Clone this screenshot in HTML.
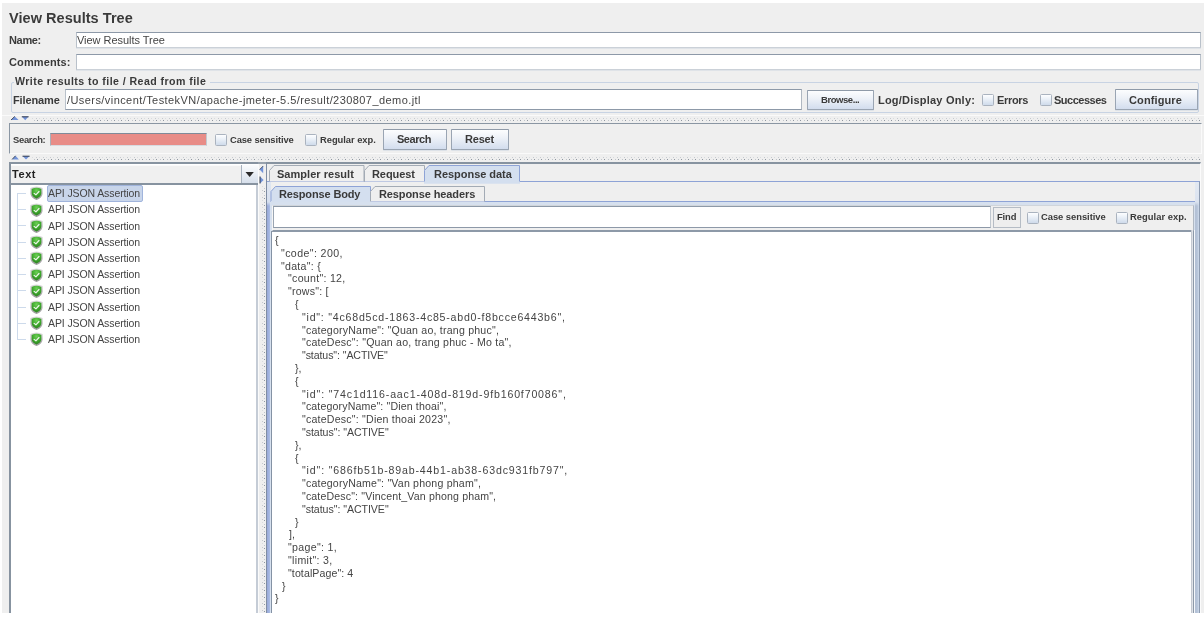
<!DOCTYPE html>
<html><head><meta charset="utf-8"><style>
html,body{margin:0;padding:0;background:#fff;width:1204px;height:618px;overflow:hidden;position:relative;font-family:"Liberation Sans",sans-serif;}
div{box-sizing:border-box;}
.a{position:absolute;}
.t{position:absolute;white-space:pre;will-change:transform;}
.page{position:absolute;left:2px;top:3px;width:1202px;height:610px;background:#efefef;}
.fld{position:absolute;background:#fff;border-top:1px solid #8d99a8;border-left:1px solid #b9c1ca;border-right:1px solid #b9c1ca;border-bottom:1px solid #cbd1d8;box-shadow:0 1px 0 #dfe3e8;}
.btn{position:absolute;border:1px solid #9aa5b3;border-top-color:#8f9aa8;border-radius:1px;background:linear-gradient(#fcfdfe,#eef2f8 40%,#d2ddee);box-shadow:0 1px 0 #dde2e8;}
.cb{position:absolute;width:12px;height:11.8px;border:1px solid #aab3bf;border-radius:1.5px;background:linear-gradient(#fdfeff,#e9eff7 45%,#cfdbeb);}
.split{position:absolute;background-image:radial-gradient(circle at 1px 1px,#b8bcc2 0.7px,transparent 0.9px);background-size:3.5px 2px;}

</style></head><body>
<div class="page"></div>
<!-- name / comments -->
<div class="fld" style="left:76px;top:32px;width:1125px;height:16px;"></div>
<div class="fld" style="left:76px;top:54px;width:1125px;height:16px;"></div>
<!-- group box -->
<div class="a" style="left:11px;top:82px;width:1188px;height:31px;border:1px solid #c8d3e3;border-radius:2px;"></div>
<div class="a" style="left:14px;top:76px;width:196px;height:10px;background:#efefef;"></div>
<div class="fld" style="left:65px;top:89px;width:737px;height:21px;border-bottom-color:#8d99a8;border-right-color:#b0b8c2;box-shadow:none;"></div>
<div class="btn" style="left:807px;top:90px;width:67px;height:20px;"></div>
<div class="cb" style="left:982px;top:94px;"></div>
<div class="cb" style="left:1040px;top:94px;"></div>
<div class="btn" style="left:1115px;top:89px;width:83px;height:21px;"></div>
<!-- splitter 1 -->
<svg class="a" style="left:0;top:0" width="1204" height="618">
<defs>
<pattern id="dh" x="0" y="0" width="7" height="4" patternUnits="userSpaceOnUse"><rect x="1" y="0" width="1" height="1" fill="#c6cacf"/><rect x="4" y="0" width="1" height="1" fill="#d9dcdf"/><rect x="2" y="2" width="1" height="1" fill="#8e96a0"/><rect x="6" y="2" width="1" height="1" fill="#c0c5cb"/></pattern>
<pattern id="dv" x="0" y="0" width="4" height="7" patternUnits="userSpaceOnUse"><rect x="0" y="1" width="1" height="1" fill="#c6cacf"/><rect x="0" y="4" width="1" height="1" fill="#d9dcdf"/><rect x="2" y="2" width="1" height="1" fill="#8e96a0"/><rect x="2" y="6" width="1" height="1" fill="#c0c5cb"/></pattern>
</defs>
<rect x="31" y="0" width="1170" height="3" fill="url(#dh)" transform="translate(0,118)"/>
<rect x="31" y="0" width="1170" height="3" fill="url(#dh)" transform="translate(0,157)"/>
<rect x="0" y="186" width="3" height="427" fill="url(#dv)" transform="translate(262,0)"/>
</svg>

<div class="a" style="left:2px;top:115px;width:1202px;height:1px;background:#fafafa;"></div>
<svg class="a" style="left:0;top:0" width="40" height="170">
<path d="M11,120 L14.8,116.4 L18.6,120 Z" fill="#7192d8"/><path d="M11,120 L14.8,116.4" stroke="#3b4250" stroke-width="0.9"/>
<path d="M21.8,116.6 L28.6,116.6 L25.2,120.2 Z" fill="#7192d8"/><path d="M21.8,116.8 L28.6,116.8" stroke="#3b4250" stroke-width="1"/>
<path d="M12.1,159.4 L15.5,155.8 L18.9,159.4 Z" fill="#7192d8"/><path d="M12.1,159.4 L15.5,155.8" stroke="#3b4250" stroke-width="0.9"/>
<path d="M22.5,156 L29.6,156 L26,159.6 Z" fill="#7192d8"/><path d="M22.5,156.2 L29.6,156.2" stroke="#3b4250" stroke-width="1"/>
</svg>
<!-- search panel -->
<div class="a" style="left:9px;top:123px;width:1193px;height:31px;border-top:1.5px solid #8a96a3;border-left:1px solid #8a96a3;border-right:1px solid #fafafa;border-bottom:1px solid #fafafa;"></div>
<div class="a" style="left:50px;top:133px;width:157px;height:13px;background:#e88c87;border-top:1px solid #7f8a98;border-left:1px solid #a9b0b9;border-right:1px solid #c3c9d0;border-bottom:1px solid #d7dbe0;"></div>
<div class="cb" style="left:215px;top:134px;"></div>
<div class="cb" style="left:305px;top:134px;"></div>
<div class="btn" style="left:383px;top:129px;width:64px;height:21px;"></div>
<div class="btn" style="left:451px;top:129px;width:58px;height:21px;"></div>
<!-- splitter 2 -->
<!-- tree panel -->
<div class="a" style="left:9px;top:162px;width:249px;height:451px;border-top:2.5px solid #8793a0;border-left:2px solid #8793a0;background:#fff;"></div>
<div class="a" style="left:11px;top:164.5px;width:246.5px;height:20px;background:#f0f0f0;border-top:1px solid #fafafa;border-bottom:2px solid #8793a0;"></div>
<div class="a" style="left:241px;top:164.5px;width:16.5px;height:18px;background:linear-gradient(#fbfcfd,#d6dfeb);border-left:1px solid #a8b2be;"></div>
<svg class="a" style="left:0;top:0" width="260" height="180"><path d="M245.5,172 L253.8,172 L249.65,177 Z" fill="#2a2a2a"/></svg>
<div class="a" style="left:256px;top:184.5px;width:1.8px;height:428.5px;background:#c5ccd6;"></div><div class="a" style="left:258px;top:163.5px;width:1px;height:449.5px;background:#fbfbfb;"></div>
<!-- vertical splitter -->
<div class="a" style="left:258px;top:162px;width:8px;height:1.5px;background:#98a2ad;"></div><svg class="a" style="left:0;top:0" width="280" height="200"><path d="M263.2,166 L263.2,173.2 L259.6,169.6 Z" fill="#7192d8"/><path d="M263.2,166 L259.6,169.6" stroke="#3b4250" stroke-width="0.8"/><path d="M260,176.5 L260,183.5 L263.6,180 Z" fill="#7192d8"/><path d="M260,176.5 L260,183.5" stroke="#3b4250" stroke-width="1"/></svg>
<!-- right panel -->
<div class="a" style="left:266px;top:162px;width:935px;height:451px;border-top:2px solid #8793a0;border-left:1px solid #7f8da3;border-right:1px solid #fbfbfb;background:#efefef;"></div>
<!-- outer tab content -->
<div class="a" style="left:267px;top:181px;width:933px;height:432px;border-top:1px solid #8ea3d6;border-right:1px solid #8d9bb0;background:#efefef;"></div>
<div class="a" style="left:267px;top:182px;width:3.5px;height:431px;background:linear-gradient(#dfe6f1,#d6dfee 20px,rgba(0,0,0,0) 24px),linear-gradient(90deg,#97a7d7,#a4b6e0 50%,#b0c4e8);"></div>
<div class="a" style="left:1195px;top:182px;width:4px;height:431px;background:linear-gradient(#e3e9f2,#dbe3f0 20px,rgba(0,0,0,0) 24px),linear-gradient(90deg,#b3c0d4,#b5c3d8 55%,#d0dcec);"></div>
<!-- outer tabs -->
<svg class="a" style="left:268px;top:165px" width="253" height="20" viewBox="0 0 253 20">
<path d="M1.5,16.5 L1.5,5.5 L6,0.5 L96,0.5 L96,16.5" fill="#efefef" stroke="#a3abb5" stroke-width="1"/>
<path d="M96.5,16.5 L96.5,5.5 L101,0.5 L156.5,0.5 L156.5,16.5" fill="#efefef" stroke="#a3abb5" stroke-width="1"/>
<path d="M156,18.8 L156,5.5 L161,0 L252,0 L252,18.8 Z" fill="#d4dfef"/><path d="M156.5,16.5 L156.5,5.5 L161,0.5 L251.5,0.5 L251.5,16.5" fill="none" stroke="#8ea3d6" stroke-width="1"/>
</svg>
<!-- inner tab content -->
<div class="a" style="left:270px;top:201px;width:925px;height:412px;border-top:1px solid #8ea3d6;background:#d6e0ee;"></div>
<svg class="a" style="left:270px;top:186px" width="216" height="16" viewBox="0 0 216 16">
<path d="M0.5,16 L0.5,5.5 L5.5,0 L101,0 L101,16 Z" fill="#d4dfef"/><path d="M1,15 L1,5.5 L5.5,0.5 L100.5,0.5 L100.5,15" fill="none" stroke="#8ea3d6" stroke-width="1"/>
<path d="M100.5,15.5 L100.5,5.5 L105,0.5 L214.5,0.5 L214.5,15.5" fill="#efefef" stroke="#a3abb5" stroke-width="1"/>
</svg>
<!-- find panel -->
<div class="a" style="left:271.5px;top:205px;width:922.5px;height:26px;background:#efefef;border-top:1px solid #d0d5db;border-left:1px solid #f6f6f6;border-right:1px solid #b0b8c2;border-bottom:1px solid #8d99a8;"></div>
<div class="a" style="left:273px;top:206px;width:718px;height:21.5px;background:#fff;border-top:1.5px solid #8d99a8;border-left:1px solid #9aa5b2;border-right:1px solid #c0c7cf;border-bottom:1px solid #8d99a8;"></div>
<div class="a" style="left:992.5px;top:206.5px;width:28.5px;height:21px;border:1px solid #b5bcc5;background:#eeeeee;"></div>
<div class="cb" style="left:1027px;top:212px;"></div>
<div class="cb" style="left:1116px;top:212px;"></div>
<!-- text area -->
<div class="a" style="left:270.5px;top:230.5px;width:923.5px;height:382.5px;border-top:0.5px solid #8d99a8;background:#fff;border-left:1.5px solid #8492a4;border-right:1px solid #8d99a8;"></div><div class="a" style="left:1191px;top:230px;width:1px;height:383px;background:#c5cad2;"></div><div class="a" style="left:1192px;top:230px;width:1px;height:383px;background:#e0e3e8;"></div><div class="a" style="left:1194px;top:230px;width:1px;height:383px;background:#f5f8fc;"></div>
<!-- tree items -->
<div class="a" style="left:47.3px;top:185.2px;width:95.3px;height:16.4px;background:#c8d5ea;border:1px solid #a0b4dc;border-radius:2px;"></div>
<div class="a" style="left:17px;top:193px;width:1px;height:147px;background:#cddaeb;"></div>
<svg width="0" height="0" style="position:absolute"><defs><linearGradient id="sg" x1="0" y1="0" x2="0" y2="1"><stop offset="0" stop-color="#dcdcdc"/><stop offset="0.5" stop-color="#b4b4b4"/><stop offset="1" stop-color="#9a9a9a"/></linearGradient><radialGradient id="gg" cx="0.5" cy="0.25" r="0.8"><stop offset="0" stop-color="#6ccf55"/><stop offset="0.55" stop-color="#3da62c"/><stop offset="1" stop-color="#2a7f1f"/></radialGradient><symbol id="shield" viewBox="0 0 13 14"><path d="M0.4,2 Q6.5,-1.2 12.6,2 L12.6,7 C12.6,10.6 9.6,12.9 6.5,13.9 C3.4,12.9 0.4,10.6 0.4,7 Z" fill="url(#sg)"/><path d="M1.7,3.1 Q6.5,0.4 11.3,3.1 L11.3,7 C11.3,9.8 9,11.6 6.5,12.4 C4,11.6 1.7,9.8 1.7,7 Z" fill="url(#gg)"/><path d="M4.1,7.4 L5.9,8.8 L9,5.5" fill="none" stroke="#eef8ea" stroke-width="1.2" stroke-linecap="round" stroke-linejoin="round"/></symbol></defs></svg>
<div class="a" style="left:18px;top:193.00px;width:8px;height:1px;background:#cddaeb;"></div>
<svg class="a" style="left:30px;top:186.40px" width="13" height="14"><use href="#shield"/></svg>
<div class="a" style="left:18px;top:209.22px;width:8px;height:1px;background:#cddaeb;"></div>
<svg class="a" style="left:30px;top:202.62px" width="13" height="14"><use href="#shield"/></svg>
<div class="a" style="left:18px;top:225.44px;width:8px;height:1px;background:#cddaeb;"></div>
<svg class="a" style="left:30px;top:218.84px" width="13" height="14"><use href="#shield"/></svg>
<div class="a" style="left:18px;top:241.66px;width:8px;height:1px;background:#cddaeb;"></div>
<svg class="a" style="left:30px;top:235.06px" width="13" height="14"><use href="#shield"/></svg>
<div class="a" style="left:18px;top:257.88px;width:8px;height:1px;background:#cddaeb;"></div>
<svg class="a" style="left:30px;top:251.28px" width="13" height="14"><use href="#shield"/></svg>
<div class="a" style="left:18px;top:274.10px;width:8px;height:1px;background:#cddaeb;"></div>
<svg class="a" style="left:30px;top:267.50px" width="13" height="14"><use href="#shield"/></svg>
<div class="a" style="left:18px;top:290.32px;width:8px;height:1px;background:#cddaeb;"></div>
<svg class="a" style="left:30px;top:283.72px" width="13" height="14"><use href="#shield"/></svg>
<div class="a" style="left:18px;top:306.54px;width:8px;height:1px;background:#cddaeb;"></div>
<svg class="a" style="left:30px;top:299.94px" width="13" height="14"><use href="#shield"/></svg>
<div class="a" style="left:18px;top:322.76px;width:8px;height:1px;background:#cddaeb;"></div>
<svg class="a" style="left:30px;top:316.16px" width="13" height="14"><use href="#shield"/></svg>
<div class="a" style="left:18px;top:338.98px;width:8px;height:1px;background:#cddaeb;"></div>
<svg class="a" style="left:30px;top:332.38px" width="13" height="14"><use href="#shield"/></svg>

<div class="t" style="left:8.83px;top:9.88px;font-size:14.5px;line-height:16.20px;font-weight:bold;color:#3a3a3a;letter-spacing:0.045px;">View Results Tree</div>
<div class="t" style="left:9.04px;top:34.25px;font-size:11px;line-height:12.29px;font-weight:bold;color:#3a3a3a;letter-spacing:-0.336px;">Name:</div>
<div class="t" style="left:76.94px;top:34.05px;font-size:11px;line-height:12.29px;color:#444444;letter-spacing:-0.036px;">View Results Tree</div>
<div class="t" style="left:8.54px;top:56.14px;font-size:11px;line-height:12.29px;font-weight:bold;color:#3a3a3a;letter-spacing:0.121px;">Comments:</div>
<div class="t" style="left:15.36px;top:75.61px;font-size:10.6px;line-height:11.84px;font-weight:bold;color:#3a3a3a;letter-spacing:0.438px;">Write results to file / Read from file</div>
<div class="t" style="left:12.84px;top:93.95px;font-size:11px;line-height:12.29px;font-weight:bold;color:#3a3a3a;letter-spacing:-0.115px;">Filename</div>
<div class="t" style="left:67.14px;top:94.05px;font-size:11px;line-height:12.29px;color:#444444;letter-spacing:0.428px;">/Users/vincent/TestekVN/apache-jmeter-5.5/result/230807_demo.jtl</div>
<div class="t" style="left:820.83px;top:94.70px;font-size:9.5px;line-height:10.61px;font-weight:bold;color:#3a3a3a;letter-spacing:-0.436px;">Browse...</div>
<div class="t" style="left:877.74px;top:94.14px;font-size:11px;line-height:12.29px;font-weight:bold;color:#3a3a3a;letter-spacing:0.210px;">Log/Display Only:</div>
<div class="t" style="left:996.74px;top:94.05px;font-size:11px;line-height:12.29px;font-weight:bold;color:#3a3a3a;letter-spacing:-0.330px;">Errors</div>
<div class="t" style="left:1053.84px;top:94.05px;font-size:11px;line-height:12.29px;font-weight:bold;color:#3a3a3a;letter-spacing:-0.501px;">Successes</div>
<div class="t" style="left:1129.34px;top:94.05px;font-size:11px;line-height:12.29px;font-weight:bold;color:#3a3a3a;letter-spacing:0.116px;">Configure</div>
<div class="t" style="left:13.44px;top:134.59px;font-size:9.4px;line-height:10.50px;font-weight:bold;color:#3a3a3a;letter-spacing:-0.276px;">Search:</div>
<div class="t" style="left:229.94px;top:134.59px;font-size:9.4px;line-height:10.50px;font-weight:bold;color:#3a3a3a;letter-spacing:-0.108px;">Case sensitive</div>
<div class="t" style="left:319.94px;top:134.59px;font-size:9.4px;line-height:10.50px;font-weight:bold;color:#3a3a3a;letter-spacing:-0.048px;">Regular exp.</div>
<div class="t" style="left:397.34px;top:133.44px;font-size:11px;line-height:12.29px;font-weight:bold;color:#3a3a3a;letter-spacing:-0.465px;">Search</div>
<div class="t" style="left:465.04px;top:133.44px;font-size:11px;line-height:12.29px;font-weight:bold;color:#3a3a3a;letter-spacing:-0.197px;">Reset</div>
<div class="t" style="left:12.44px;top:167.74px;font-size:11px;line-height:12.29px;font-weight:bold;color:#222222;letter-spacing:0.556px;">Text</div>
<div class="t" style="left:47.97px;top:188.10px;font-size:10.5px;line-height:11.73px;color:#444444;letter-spacing:-0.107px;">API JSON Assertion</div>
<div class="t" style="left:47.97px;top:204.32px;font-size:10.5px;line-height:11.73px;color:#444444;letter-spacing:-0.107px;">API JSON Assertion</div>
<div class="t" style="left:47.97px;top:220.54px;font-size:10.5px;line-height:11.73px;color:#444444;letter-spacing:-0.107px;">API JSON Assertion</div>
<div class="t" style="left:47.97px;top:236.76px;font-size:10.5px;line-height:11.73px;color:#444444;letter-spacing:-0.107px;">API JSON Assertion</div>
<div class="t" style="left:47.97px;top:252.98px;font-size:10.5px;line-height:11.73px;color:#444444;letter-spacing:-0.107px;">API JSON Assertion</div>
<div class="t" style="left:47.97px;top:269.20px;font-size:10.5px;line-height:11.73px;color:#444444;letter-spacing:-0.107px;">API JSON Assertion</div>
<div class="t" style="left:47.97px;top:285.42px;font-size:10.5px;line-height:11.73px;color:#444444;letter-spacing:-0.107px;">API JSON Assertion</div>
<div class="t" style="left:47.97px;top:301.64px;font-size:10.5px;line-height:11.73px;color:#444444;letter-spacing:-0.107px;">API JSON Assertion</div>
<div class="t" style="left:47.97px;top:317.86px;font-size:10.5px;line-height:11.73px;color:#444444;letter-spacing:-0.107px;">API JSON Assertion</div>
<div class="t" style="left:47.97px;top:334.08px;font-size:10.5px;line-height:11.73px;color:#444444;letter-spacing:-0.107px;">API JSON Assertion</div>
<div class="t" style="left:276.84px;top:167.74px;font-size:11px;line-height:12.29px;font-weight:bold;color:#3a3a3a;letter-spacing:0.035px;">Sampler result</div>
<div class="t" style="left:371.94px;top:167.74px;font-size:11px;line-height:12.29px;font-weight:bold;color:#3a3a3a;letter-spacing:-0.088px;">Request</div>
<div class="t" style="left:433.84px;top:167.74px;font-size:11px;line-height:12.29px;font-weight:bold;color:#3a3a3a;letter-spacing:-0.031px;">Response data</div>
<div class="t" style="left:279.34px;top:188.24px;font-size:11px;line-height:12.29px;font-weight:bold;color:#3a3a3a;letter-spacing:-0.138px;">Response Body</div>
<div class="t" style="left:378.84px;top:188.24px;font-size:11px;line-height:12.29px;font-weight:bold;color:#3a3a3a;letter-spacing:-0.103px;">Response headers</div>
<div class="t" style="left:996.54px;top:212.49px;font-size:9.4px;line-height:10.50px;font-weight:bold;color:#3a3a3a;letter-spacing:-0.115px;">Find</div>
<div class="t" style="left:1040.94px;top:212.49px;font-size:9.4px;line-height:10.50px;font-weight:bold;color:#3a3a3a;letter-spacing:-0.031px;">Case sensitive</div>
<div class="t" style="left:1130.44px;top:212.49px;font-size:9.4px;line-height:10.50px;font-weight:bold;color:#3a3a3a;letter-spacing:0.025px;">Regular exp.</div>
<div class="t" style="left:274.66px;top:235.01px;font-size:10.6px;line-height:11.84px;color:#444444;">{</div>
<div class="t" style="left:280.96px;top:247.81px;font-size:10.6px;line-height:11.84px;color:#444444;letter-spacing:0.404px;">"code": 200,</div>
<div class="t" style="left:280.96px;top:260.61px;font-size:10.6px;line-height:11.84px;color:#444444;letter-spacing:0.271px;">"data": {</div>
<div class="t" style="left:288.06px;top:273.41px;font-size:10.6px;line-height:11.84px;color:#444444;letter-spacing:0.290px;">"count": 12,</div>
<div class="t" style="left:288.06px;top:286.21px;font-size:10.6px;line-height:11.84px;color:#444444;letter-spacing:0.216px;">"rows": [</div>
<div class="t" style="left:295.26px;top:299.01px;font-size:10.6px;line-height:11.84px;color:#444444;">{</div>
<div class="t" style="left:301.86px;top:311.81px;font-size:10.6px;line-height:11.84px;color:#444444;letter-spacing:0.773px;">"id": "4c68d5cd-1863-4c85-abd0-f8bcce6443b6",</div>
<div class="t" style="left:301.86px;top:324.61px;font-size:10.6px;line-height:11.84px;color:#444444;letter-spacing:0.202px;">"categoryName": "Quan ao, trang phuc",</div>
<div class="t" style="left:301.86px;top:337.41px;font-size:10.6px;line-height:11.84px;color:#444444;letter-spacing:0.217px;">"cateDesc": "Quan ao, trang phuc - Mo ta",</div>
<div class="t" style="left:301.86px;top:350.21px;font-size:10.6px;line-height:11.84px;color:#444444;letter-spacing:-0.095px;">"status": "ACTIVE"</div>
<div class="t" style="left:295.26px;top:363.01px;font-size:10.6px;line-height:11.84px;color:#444444;">},</div>
<div class="t" style="left:295.26px;top:375.81px;font-size:10.6px;line-height:11.84px;color:#444444;">{</div>
<div class="t" style="left:301.86px;top:388.61px;font-size:10.6px;line-height:11.84px;color:#444444;letter-spacing:0.840px;">"id": "74c1d116-aac1-408d-819d-9fb160f70086",</div>
<div class="t" style="left:301.86px;top:401.41px;font-size:10.6px;line-height:11.84px;color:#444444;letter-spacing:0.139px;">"categoryName": "Dien thoai",</div>
<div class="t" style="left:301.86px;top:414.21px;font-size:10.6px;line-height:11.84px;color:#444444;letter-spacing:0.210px;">"cateDesc": "Dien thoai 2023",</div>
<div class="t" style="left:301.86px;top:427.01px;font-size:10.6px;line-height:11.84px;color:#444444;letter-spacing:-0.048px;">"status": "ACTIVE"</div>
<div class="t" style="left:295.26px;top:439.81px;font-size:10.6px;line-height:11.84px;color:#444444;">},</div>
<div class="t" style="left:295.26px;top:452.61px;font-size:10.6px;line-height:11.84px;color:#444444;">{</div>
<div class="t" style="left:301.86px;top:465.41px;font-size:10.6px;line-height:11.84px;color:#444444;letter-spacing:0.840px;">"id": "686fb51b-89ab-44b1-ab38-63dc931fb797",</div>
<div class="t" style="left:301.86px;top:478.21px;font-size:10.6px;line-height:11.84px;color:#444444;letter-spacing:0.193px;">"categoryName": "Van phong pham",</div>
<div class="t" style="left:301.86px;top:491.01px;font-size:10.6px;line-height:11.84px;color:#444444;letter-spacing:0.141px;">"cateDesc": "Vincent_Van phong pham",</div>
<div class="t" style="left:301.86px;top:503.81px;font-size:10.6px;line-height:11.84px;color:#444444;letter-spacing:-0.048px;">"status": "ACTIVE"</div>
<div class="t" style="left:295.26px;top:516.61px;font-size:10.6px;line-height:11.84px;color:#444444;">}</div>
<div class="t" style="left:288.66px;top:529.41px;font-size:10.6px;line-height:11.84px;color:#444444;">],</div>
<div class="t" style="left:288.06px;top:542.21px;font-size:10.6px;line-height:11.84px;color:#444444;letter-spacing:0.315px;">"page": 1,</div>
<div class="t" style="left:288.06px;top:555.01px;font-size:10.6px;line-height:11.84px;color:#444444;letter-spacing:0.317px;">"limit": 3,</div>
<div class="t" style="left:288.06px;top:567.81px;font-size:10.6px;line-height:11.84px;color:#444444;letter-spacing:0.090px;">"totalPage": 4</div>
<div class="t" style="left:281.56px;top:580.61px;font-size:10.6px;line-height:11.84px;color:#444444;">}</div>
<div class="t" style="left:274.66px;top:593.41px;font-size:10.6px;line-height:11.84px;color:#444444;">}</div>
</body></html>
